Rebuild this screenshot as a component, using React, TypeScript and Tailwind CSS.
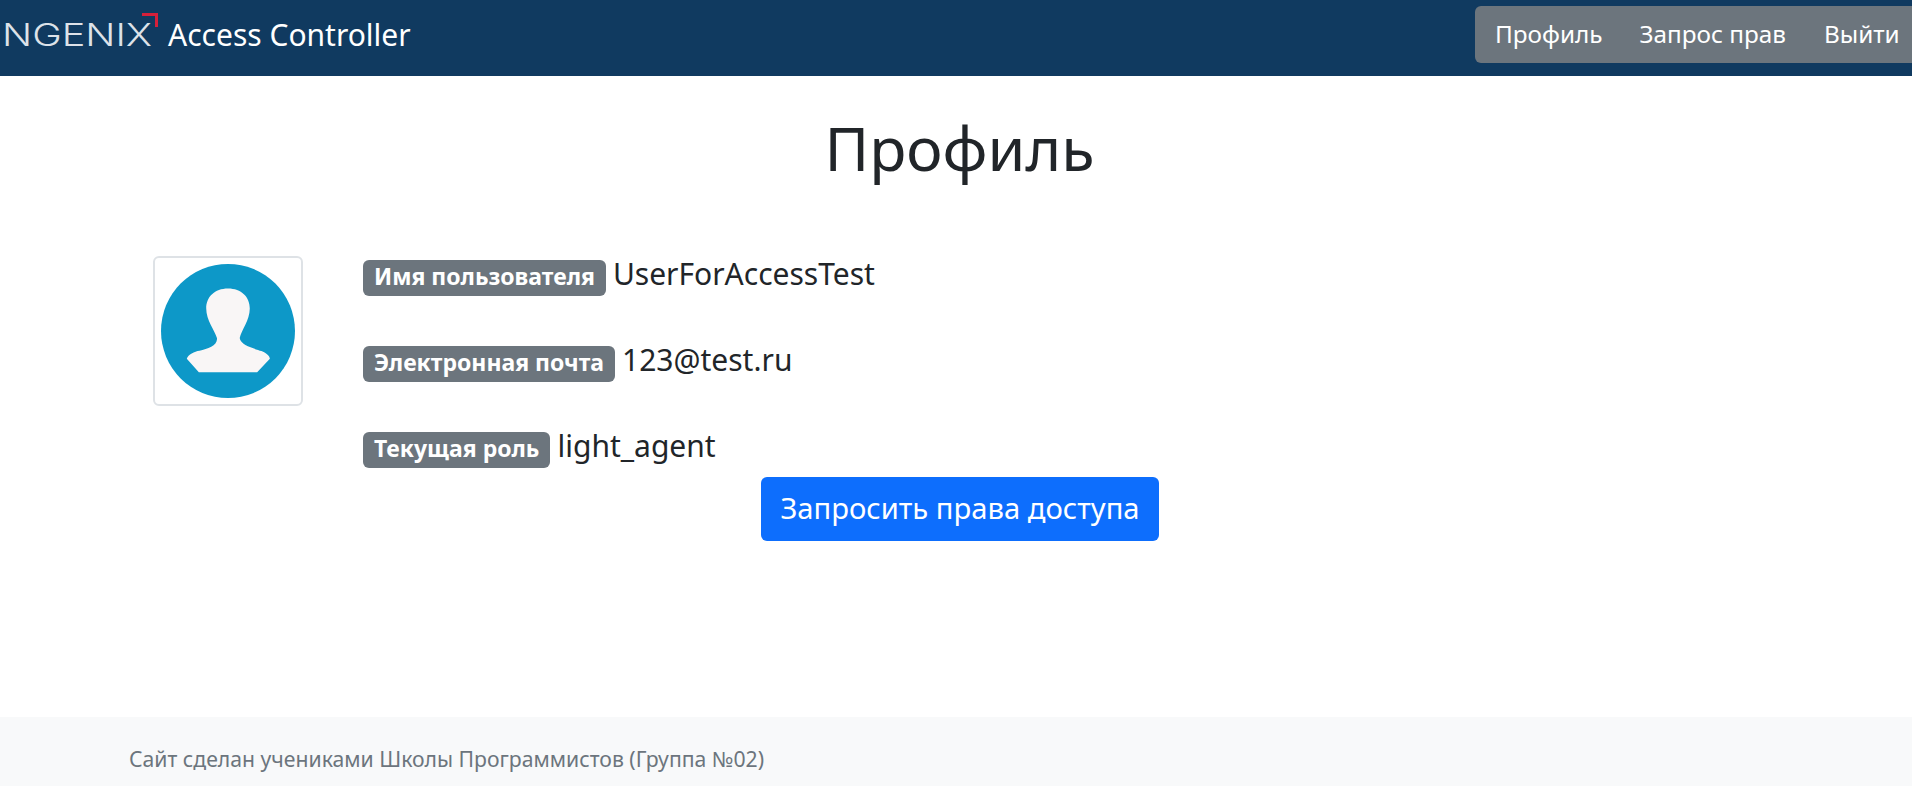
export default function App() {
  const rows = [
    ["Имя пользователя", "UserForAccessTest"],
    ["Электронная почта", "123@test.ru"],
    ["Текущая роль", "light_agent"],
  ];
  return (
    <div className="flex h-[786px] flex-col overflow-hidden bg-white font-['Noto_Sans',sans-serif] text-[#212529]">
      <header className="flex h-[76px] items-start justify-between bg-[#103a60]">
        <div className="mt-[14px] flex items-center">
          <div className="relative ml-[2px] w-[154px]">
            <span className="block origin-left scale-x-[1.28] font-['Inter',sans-serif] text-[31px] font-light leading-[38px] text-[#dde2e9]">NGENIX</span>
            <svg className="absolute left-[140px] top-[-3px]" width="16" height="14" viewBox="0 0 16 14">
              <path d="M0 1.5H14.5V14" fill="none" stroke="#d5203a" strokeWidth="3" />
            </svg>
          </div>
          <span className="ml-[12px] text-[30px] leading-[42px] text-white">Access Controller</span>
        </div>
        <nav className="mt-[6px] flex h-[57px] w-[437px] items-center rounded-l-[6px] bg-[#6c757d] pl-[20px] text-[24.3px] text-white">
          <a className="mr-[37px]">Профиль</a>
          <a className="mr-[38px]">Запрос прав</a>
          <a>Выйти</a>
        </nav>
      </header>
      <main className="flex-1">
        <h1 className="mt-[30px] pl-[7px] text-center text-[61px] font-normal leading-[84px]">Профиль</h1>
        <div className="mt-[66px] flex">
          <div className="ml-[153px] h-[150px] w-[150px] shrink-0 rounded-[6px] border-2 border-[#dee2e6] bg-white p-[6px]">
            <svg className="h-[134px] w-[134px]" viewBox="65 72 400 400">
              <circle cx="265" cy="272" r="200" fill="#0d98c8" />
              <path d="M265 145C305 145 330 170 330 205C330 240 305 270 300 293C302 315 345 325 365 332C378 337 390 347 390 355L352 395H178L142 355C146 342 165 333 180 331C205 325 235 315 232 293C225 270 200 240 200 205C200 170 225 145 265 145Z" fill="#f9f6f6" />
            </svg>
          </div>
          <div className="ml-[60px] flex flex-col">
            {rows.map(([label, value]) => (
              <div key={label} className="flex h-[86px] items-start">
                <span className="mt-[4px] h-[36px] rounded-[6px] bg-[#6c757d] px-[11px] py-[4px] text-[23px] font-bold leading-[24px] text-white">{label}</span>
                <span className="ml-[7px] mt-[1px] text-[30px] leading-[34px]">{value}</span>
              </div>
            ))}
          </div>
        </div>
        <div className="mt-[-37px] flex justify-center">
          <button className="ml-[8px] h-[64px] w-[398px] rounded-[6px] bg-[#0d6efd] text-[29.2px] text-white">Запросить права доступа</button>
        </div>
      </main>
      <footer className="flex h-[69px] items-start bg-[#f8f9fa] pl-[129px] pt-[27px] text-[21.2px] leading-[30px] text-[#6c757d]">
        Сайт сделан учениками Школы Программистов (Группа №02)
      </footer>
    </div>
  );
}
